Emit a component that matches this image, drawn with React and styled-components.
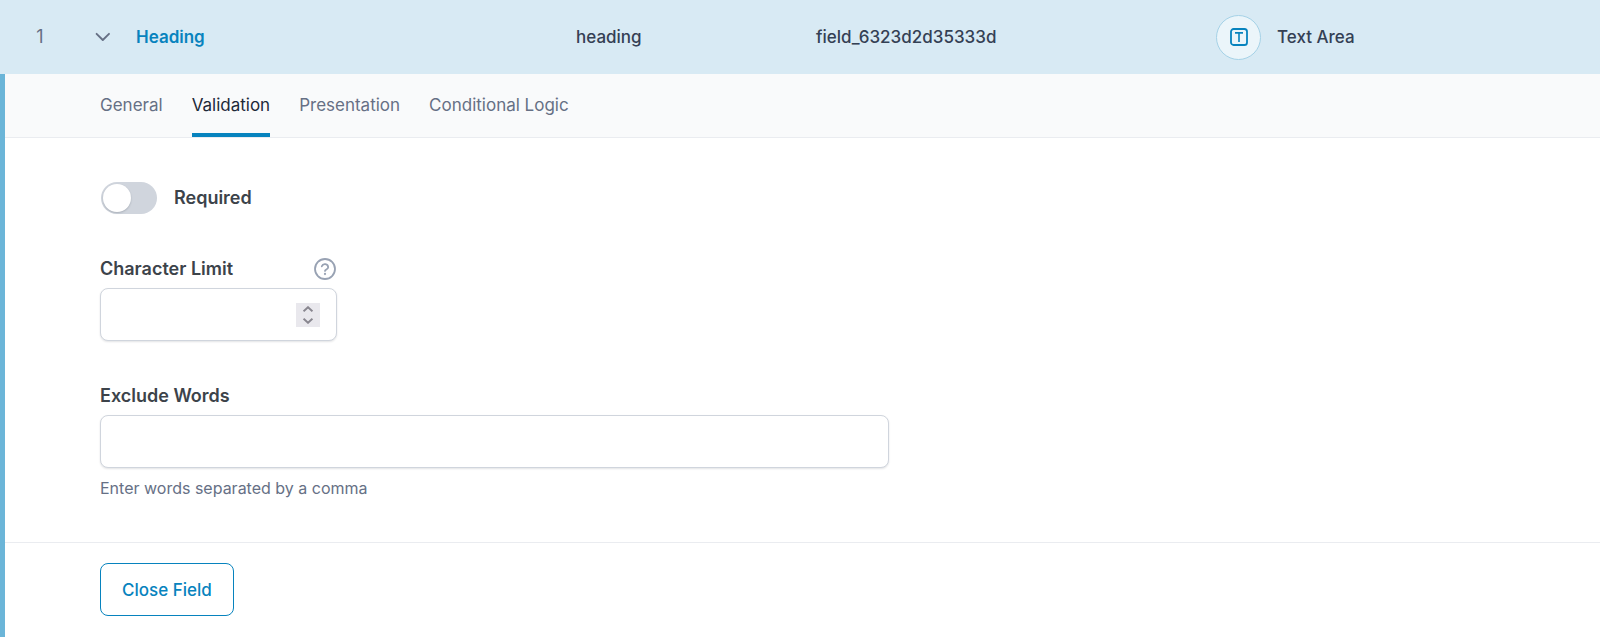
import { useState } from "react";
import styled, { createGlobalStyle } from "styled-components";

const tabs = ["General", "Validation", "Presentation", "Conditional Logic"];

export default function App() {
  const [open, setOpen] = useState(true);

  return (
    <>
      <GlobalStyle />
      <FieldHeader open={open} setOpen={setOpen} />
      {open && <FieldSettings onClose={() => setOpen(false)} />}
    </>
  );
}

function FieldHeader({ open, setOpen }) {
  return (
    <Header>
      <Order>1</Order>
      <LabelCell>
        <ToggleButton type="button" aria-label="Toggle field" aria-expanded={open} onClick={() => setOpen(!open)}>
          <svg width="16" height="10" viewBox="0 0 16 10" fill="none" stroke="#667085" strokeWidth="1.9" strokeLinecap="round" strokeLinejoin="round">
            <path d="M1.6 1.8 7.8 8 14 1.8" />
          </svg>
        </ToggleButton>
        <FieldLink href="#heading">Heading</FieldLink>
      </LabelCell>
      <Cell>heading</Cell>
      <Cell>field_6323d2d35333d</Cell>
      <Cell>
        <TypeIcon>
          <svg width="18" height="18" viewBox="0 0 18 18" fill="none" stroke="#0783be">
            <rect x="1" y="1" width="16" height="16" rx="2.6" strokeWidth="1.8" />
            <path d="M5 4.9h8M9 4.9v9" strokeWidth="1.6" />
          </svg>
        </TypeIcon>
        Text Area
      </Cell>
    </Header>
  );
}

function FieldSettings({ onClose }) {
  const [activeTab, setActiveTab] = useState("Validation");

  return (
    <Settings>
      <TabBar role="tablist">
        {tabs.map((tab) => (
          <Tab key={tab} type="button" role="tab" aria-selected={tab === activeTab} $active={tab === activeTab} onClick={() => setActiveTab(tab)}>
            {tab}
          </Tab>
        ))}
      </TabBar>
      <ValidationForm />
      <Footer>
        <CloseButton type="button" onClick={onClose}>Close Field</CloseButton>
      </Footer>
    </Settings>
  );
}

function ValidationForm() {
  const [required, setRequired] = useState(false);
  const [limit, setLimit] = useState("");
  const [words, setWords] = useState("");

  function step(amount) {
    setLimit(Math.max(0, Number(limit) + amount));
  }

  return (
    <Form onSubmit={(e) => e.preventDefault()}>
      <SwitchRow>
        <Switch id="required" type="checkbox" checked={required} onChange={(e) => setRequired(e.target.checked)} />
        <Label htmlFor="required">Required</Label>
      </SwitchRow>
      <Setting $width="30%">
        <LabelRow>
          <Label htmlFor="limit">Character Limit</Label>
          <HelpButton type="button" aria-label="Help">
            <svg width="22" height="22" viewBox="0 0 22 22" fill="none" stroke="#98a2b3" strokeLinecap="round" strokeLinejoin="round">
              <circle cx="11" cy="11" r="10" strokeWidth="1.8" />
              <path d="M7.8 8.3a3.3 3.3 0 0 1 6.4 1c0 2.1-3.2 2.2-3.2 3.6" strokeWidth="1.8" />
              <circle cx="11" cy="16" r="0.4" strokeWidth="1.5" />
            </svg>
          </HelpButton>
        </LabelRow>
        <InputBox>
          <Input id="limit" type="number" min="0" value={limit} onChange={(e) => setLimit(e.target.value)} />
          <Stepper>
            <StepButton type="button" aria-label="Increase" onClick={() => step(1)}>
              <svg width="10" height="6" viewBox="0 0 10 6" fill="none" stroke="#88868f" strokeWidth="1.9">
                <path d="M.6 5.3 5 1.2l4.4 4.1" />
              </svg>
            </StepButton>
            <StepButton type="button" aria-label="Decrease" onClick={() => step(-1)}>
              <svg width="10" height="6" viewBox="0 0 10 6" fill="none" stroke="#88868f" strokeWidth="1.9">
                <path d="M.6.7 5 4.8 9.4.7" />
              </svg>
            </StepButton>
          </Stepper>
        </InputBox>
      </Setting>
      <Setting $width="100%">
        <LabelRow>
          <Label htmlFor="words">Exclude Words</Label>
        </LabelRow>
        <InputBox>
          <Input id="words" type="text" aria-describedby="words-hint" value={words} onChange={(e) => setWords(e.target.value)} />
        </InputBox>
        <Hint id="words-hint">Enter words separated by a comma</Hint>
      </Setting>
    </Form>
  );
}

const GlobalStyle = createGlobalStyle`
  * {
    box-sizing: border-box;
  }
  body {
    margin: 0;
    background: #ffffff;
    font-family: Inter, "Liberation Sans", sans-serif;
    font-size: 17px;
    line-height: 24px;
    color: #344054;
  }
  button, input {
    font: inherit;
  }
  svg {
    display: block;
  }
`;

const Header = styled.header`
  display: grid;
  grid-template-columns: 80px 496fr 240fr 400fr 384fr;
  align-items: center;
  min-height: 74px;
  background: #d8eaf4;
`;

const Order = styled.div`
  text-align: center;
  font-size: 18px;
  color: #667085;
`;

const Cell = styled.div`
  display: flex;
  align-items: center;
  gap: 16px;
  font-weight: 500;
`;

const LabelCell = styled(Cell)`
  padding-left: 15px;
  gap: 25px;
`;

const ToggleButton = styled.button`
  padding: 0;
  border: none;
  background: none;
  cursor: pointer;
`;

const FieldLink = styled.a`
  font-weight: 600;
  color: #0783be;
  text-decoration: none;
`;

const TypeIcon = styled.span`
  display: flex;
  align-items: center;
  justify-content: center;
  width: 45px;
  height: 45px;
  border: 1px solid #a5d2e7;
  border-radius: 50%;
  background: #ebf5fa;
`;

const Settings = styled.section`
  border-left: 5px solid #6bb5d8;
`;

const TabBar = styled.div`
  display: flex;
  gap: 29px;
  padding-left: 95px;
  border-bottom: 1px solid #eaecf0;
  background: #f9fafb;
`;

const Tab = styled.button`
  height: 63px;
  padding: 3px 0 0;
  border: none;
  border-bottom: 4px solid ${(props) => (props.$active ? "#0783be" : "transparent")};
  background: none;
  color: ${(props) => (props.$active ? "#1d2939" : "#667085")};
  cursor: pointer;
`;

const Form = styled.form`
  display: flex;
  flex-direction: column;
  gap: 43px;
  max-width: 884px;
  padding: 44px 0 42px 95px;
`;

const SwitchRow = styled.div`
  display: flex;
  align-items: center;
  gap: 17px;
  padding-left: 1px;
`;

const Switch = styled.input`
  appearance: none;
  width: 56px;
  height: 32px;
  margin: 0;
  padding: 2px;
  border-radius: 16px;
  background: ${(props) => (props.checked ? "#0783be" : "#d0d5dd")};
  cursor: pointer;

  &::before {
    content: "";
    display: block;
    width: 28px;
    height: 28px;
    margin-left: ${(props) => (props.checked ? "24px" : "0")};
    border-radius: 50%;
    background: #ffffff;
    box-shadow: 0 1px 2px rgba(16, 24, 40, 0.2);
  }
`;

const Setting = styled.div`
  width: ${(props) => props.$width};
`;

const LabelRow = styled.div`
  display: flex;
  align-items: center;
  justify-content: space-between;
  margin-bottom: 7px;
`;

const Label = styled.label`
  font-size: 18px;
  font-weight: 600;
  color: #3c434a;
`;

const HelpButton = styled.button`
  padding: 0 1px;
  border: none;
  background: none;
  cursor: pointer;
`;

const InputBox = styled.div`
  display: flex;
  align-items: center;
  height: 53px;
  padding: 0 16px;
  border: 1px solid #d0d5dd;
  border-radius: 8px;
  background: #ffffff;
  box-shadow: 0 1px 2px rgba(16, 24, 40, 0.12);
`;

const Input = styled.input`
  flex: 1;
  min-width: 0;
  height: 100%;
  padding: 0;
  border: none;
  outline: none;
  background: none;
  color: #344054;
  appearance: textfield;

  &::-webkit-inner-spin-button {
    appearance: none;
  }
`;

const Stepper = styled.div`
  display: flex;
  flex-direction: column;
  width: 24px;
  height: 24px;
  background: #e9e8ed;
`;

const StepButton = styled.button`
  display: flex;
  align-items: center;
  justify-content: center;
  flex: 1;
  padding: 0;
  border: none;
  background: none;
  cursor: pointer;
`;

const Hint = styled.p`
  margin: 8px 0 0;
  font-size: 16px;
  color: #667085;
`;

const Footer = styled.footer`
  padding: 20px 0 21px 95px;
  border-top: 1px solid #eaecf0;
`;

const CloseButton = styled.button`
  height: 53px;
  padding: 0 21px;
  border: 1px solid #0783be;
  border-radius: 8px;
  background: #ffffff;
  font-weight: 500;
  color: #0783be;
  cursor: pointer;
`;
